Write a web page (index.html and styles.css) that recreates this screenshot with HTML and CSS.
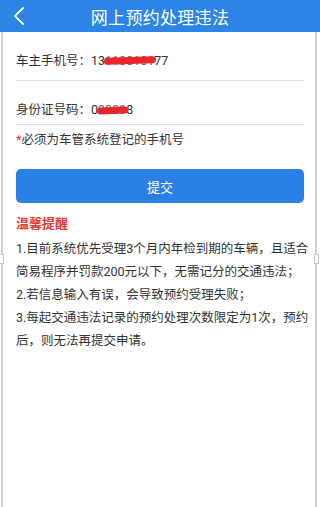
FILE: index.html
```html
<!DOCTYPE html>
<html lang="zh-CN">
<head>
    <meta charset="UTF-8">
    <meta name="viewport" content="width=device-width, initial-scale=1.0">
    <title>网上预约处理违法</title>
    <link rel="stylesheet" href="styles.css">
</head>
<body>
    <div class="header">
        <span class="back">
            <svg width="12" height="18" viewBox="0 0 12 18"><path d="M10 1 L2 9 L10 17" fill="none" stroke="#fff" stroke-width="1.8" stroke-linecap="round" stroke-linejoin="round"/></svg>
        </span>
        <h1>网上预约处理违法</h1>
    </div>
    <div class="page">
        <span class="handle left"></span>
        <span class="handle right"></span>
        <div class="row first">车主手机号：13<span class="masked m-phone">1100101</span>77</div>
        <div class="row second">身份证号码：0<span class="masked m-id">9009</span>8</div>
        <div class="note"><span class="star">*</span>必须为车管系统登记的手机号</div>
        <div class="button-group">
            <button>提交</button>
        </div>
        <div class="tips-title">温馨提醒</div>
        <div class="tips">
            1.目前系统优先受理3个月内年检到期的车辆，且适合<br>
            简易程序并罚款200元以下，无需记分的交通违法；<br>
            2.若信息输入有误，会导致预约受理失败；<br>
            3.每起交通违法记录的预约处理次数限定为1次，预约<br>
            后，则无法再提交申请。
        </div>
    </div>
</body>
</html>
```

FILE: styles.css
```css
body {
    margin: 0;
    font-family: Roboto, "Noto Sans CJK SC", sans-serif;
    color: #333;
    background: #fff;
}
.header {
    height: 32px;
    background: #2b84e6;
    display: flex;
    align-items: center;
    justify-content: center;
    position: relative;
}
.header h1 {
    margin: 0;
    font-size: 17px;
    font-weight: normal;
    color: #fff;
    letter-spacing: 0.3px;
}
.back {
    position: absolute;
    left: 13px;
    top: 7px;
}
.page {
    position: relative;
    height: 475px;
    border-left: 2px solid #cfd3d6;
    border-right: 2px solid #cfd3d6;
    margin: 0 3px 0 1px;
    padding: 0 11px 0 13px;
}
.handle {
    position: absolute;
    top: 222px;
    width: 3px;
    height: 8px;
    border: 1px solid #b8c8d0;
    background: #fff;
}
.handle.left { left: -4px; }
.handle.right { right: -4px; }
.row {
    font-size: 12.5px;
    line-height: 16px;
    border-bottom: 1px solid #e2e2e2;
}
.row.first {
    padding: 21px 0 11px;
}
.row.second {
    padding: 21px 0 6px;
}
.masked {
    position: relative;
    color: #666;
}
.masked::after {
    content: "";
    position: absolute;
    left: -1px;
    right: -2px;
    top: 5px;
    height: 7px;
    border-radius: 4px;
    background: #e8262b;
    transform: rotate(-2deg);
}
.m-phone::after { top: 4px; }
.note {
    font-size: 12.5px;
    line-height: 16px;
    padding-top: 7px;
}
.star {
    color: #e53935;
}
.button-group {
    margin-top: 21px;
}
button {
    display: block;
    width: 100%;
    height: 34px;
    border: none;
    border-radius: 5px;
    background: #2a80e4;
    color: #fff;
    font-family: inherit;
    font-size: 13px;
    padding: 0;
}
.tips-title {
    margin-top: 13px;
    color: #e53935;
    font-size: 13px;
    font-weight: bold;
    line-height: 16px;
}
.tips {
    margin-top: 5px;
    font-size: 12.5px;
    line-height: 23px;
    white-space: nowrap;
}
```
